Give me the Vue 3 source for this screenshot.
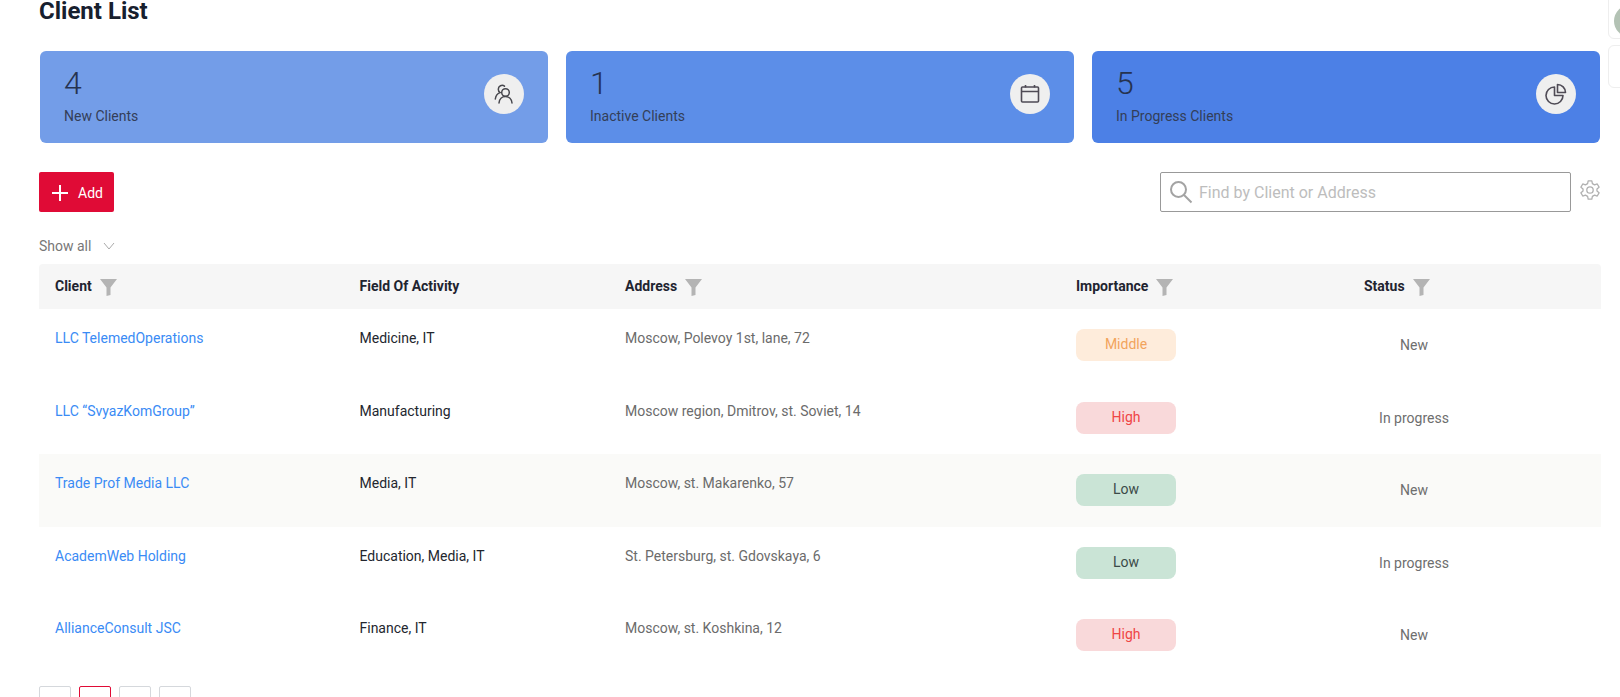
<template>
  <div class="page">
    <h1 class="title">Client List</h1>

    <div class="cards">
      <div v-for="card in cards" :key="card.label" class="card" :class="card.cls">
        <div>
          <div class="card-num">{{ card.num }}</div>
          <div class="card-label">{{ card.label }}</div>
        </div>
        <div class="card-icon">
          <svg v-if="card.icon === 'users'" width="24" height="24" viewBox="0 0 24 24" fill="none" stroke="#47474d" stroke-width="1.5" stroke-linecap="round">
            <circle cx="13.5" cy="10.5" r="3.8" />
            <path d="M7 21c.3-3.900 3-6.400 6.500-6.400s6.200 2.500 6.500 6.400" />
            <path d="M12.500 4.200A3.800 3.800 0 0 0 6.300 7.200c0 1.500.7 2.700 1.800 3.400C5.500 11.500 3.700 14 3.300 17" />
          </svg>
          <svg v-else-if="card.icon === 'calendar'" width="24" height="24" viewBox="0 0 24 24" fill="none" stroke="#4f4b55" stroke-width="1.6">
            <rect x="3.500" y="5" width="17" height="15" rx="1" />
            <path d="M3.500 9.500h17M7.500 3v2.500M16.500 3v2.500" />
          </svg>
          <svg v-else width="24" height="24" viewBox="0 0 24 24" fill="none" stroke="#4f4b55" stroke-width="1.6" stroke-linejoin="round">
            <path d="M10.500 5a8.500 8.500 0 1 0 8.500 8.500h-8.500z" />
            <path d="M13.500 2.500a8 8 0 0 1 8 8h-8z" />
          </svg>
        </div>
      </div>
    </div>

    <div class="toolbar">
      <button class="add-btn">
        <svg width="16" height="16" viewBox="0 0 16 16" stroke="#fff" stroke-width="2">
          <path d="M8 0v16M0 8h16" />
        </svg>
        Add
      </button>
      <div class="search-wrap">
        <div class="search">
          <svg width="24" height="24" viewBox="0 0 24 24" fill="none" stroke="#a3a3a3" stroke-width="2">
            <circle cx="9.500" cy="9.500" r="7.500" />
            <path d="M15 15l7.500 7.500" />
          </svg>
          <span class="placeholder">Find by Client or Address</span>
        </div>
        <svg class="gear" width="22" height="22" viewBox="0 0 24 24" fill="none" stroke="#b0b0b0" stroke-width="1.400" stroke-linejoin="round">
          <circle cx="12" cy="12" r="3.500" />
          <path d="M10 2h4l.6 3 2.400 1.400 2.900-1 2 3.500-2.300 2v2.200l2.300 2-2 3.500-2.900-1-2.400 1.400-.6 3h-4l-.6-3L7 17.600l-2.900 1-2-3.500 2.300-2v-2.200l-2.300-2 2-3.500 2.900 1L9.400 5z" />
        </svg>
      </div>
    </div>

    <div class="show-all">
      Show all
      <svg width="12" height="8" viewBox="0 0 12 8" fill="none" stroke="#aaa" stroke-width="1">
        <path d="M1 1l5 6 5-6" />
      </svg>
    </div>

    <div class="table">
      <div class="row head">
        <div v-for="col in columns" :key="col.name" class="head-cell">
          {{ col.name }}
          <svg v-if="col.filter" width="17" height="17" viewBox="0 0 17 17" fill="#b4b4b4">
            <path d="M0 0h17l-6.500 8.500V16l-4 1V8.500z" />
          </svg>
        </div>
      </div>
      <div v-for="(client, i) in clients" :key="client.name" class="row body" :class="{ striped: i === 2 }">
        <div class="cell link">{{ client.name }}</div>
        <div class="cell field">{{ client.field }}</div>
        <div class="cell address">{{ client.address }}</div>
        <div class="cell"><span class="pill" :class="client.level.toLowerCase()">{{ client.level }}</span></div>
        <div class="cell"><span class="status">{{ client.status }}</span></div>
      </div>
    </div>

    <div class="pager">
      <span class="page-box"></span>
      <span class="page-box active"></span>
      <span class="page-box"></span>
      <span class="page-box"></span>
    </div>

    <div class="side-box avatar-box"><span class="avatar"></span></div>
    <div class="side-box second-box"></div>
  </div>
</template>

<script setup>
const cards = [
  { num: 4, label: 'New Clients', cls: 'c1', icon: 'users' },
  { num: 1, label: 'Inactive Clients', cls: 'c2', icon: 'calendar' },
  { num: 5, label: 'In Progress Clients', cls: 'c3', icon: 'pie' },
]

const columns = [
  { name: 'Client', filter: true },
  { name: 'Field Of Activity', filter: false },
  { name: 'Address', filter: true },
  { name: 'Importance', filter: true },
  { name: 'Status', filter: true },
]

const clients = [
  { name: 'LLC TelemedOperations', field: 'Medicine, IT', address: 'Moscow, Polevoy 1st, lane, 72', level: 'Middle', status: 'New' },
  { name: 'LLC “SvyazKomGroup”', field: 'Manufacturing', address: 'Moscow region, Dmitrov, st. Soviet, 14', level: 'High', status: 'In progress' },
  { name: 'Trade Prof Media LLC', field: 'Media, IT', address: 'Moscow, st. Makarenko, 57', level: 'Low', status: 'New' },
  { name: 'AcademWeb Holding', field: 'Education, Media, IT', address: 'St. Petersburg, st. Gdovskaya, 6', level: 'Low', status: 'In progress' },
  { name: 'AllianceConsult JSC', field: 'Finance, IT', address: 'Moscow, st. Koshkina, 12', level: 'High', status: 'New' },
]
</script>

<style>
html, body {
  margin: 0;
  background: #fff;
  overflow: hidden;
}
</style>

<style scoped>
.page {
  position: relative;
  height: 697px;
  overflow: hidden;
  padding: 0 19px 0 39px;
  box-sizing: border-box;
  font-family: Roboto, "Liberation Sans", sans-serif;
  font-size: 14px;
  color: #1f2430;
}

.title {
  margin: 0;
  font-size: 24px;
  line-height: 23px;
  font-weight: 700;
  color: #17202e;
}

.cards {
  display: grid;
  grid-template-columns: repeat(3, 1fr);
  gap: 18px;
  margin: 28px 1px 0;
}

.card {
  height: 92px;
  box-sizing: border-box;
  padding: 15px 24px;
  border-radius: 6px;
  display: flex;
  justify-content: space-between;
  align-items: flex-start;
}

.c1 { background: #739de8; }
.c2 { background: #5c8ee8; }
.c3 { background: #4c80e6; }

.card-num {
  font-size: 32px;
  line-height: 34px;
  font-weight: 300;
  color: #263350;
}

.card-label {
  margin-top: 7px;
  font-size: 14px;
  line-height: 18px;
  color: #333e58;
}

.card-icon {
  width: 40px;
  height: 40px;
  margin-top: 8px;
  border-radius: 50%;
  background: #efefef;
  display: flex;
  align-items: center;
  justify-content: center;
}

.toolbar {
  display: flex;
  justify-content: space-between;
  margin-top: 29px;
}

.add-btn {
  width: 75px;
  height: 40px;
  display: flex;
  align-items: center;
  gap: 10px;
  padding: 2px 0 0 13px;
  border: 0;
  border-radius: 2px;
  background: #e00b36;
  color: #fff;
  font-family: inherit;
  font-size: 14px;
  font-weight: 400;
}

.search-wrap {
  display: flex;
  align-items: center;
  gap: 8px;
}

.search {
  width: 411px;
  height: 40px;
  box-sizing: border-box;
  border: 1px solid #999;
  border-radius: 2px;
  display: flex;
  align-items: center;
  gap: 6px;
  padding: 0 8px;
}

.placeholder {
  font-size: 16px;
  color: #bdbdbd;
}

.gear {
  margin-top: -4px;
}

.show-all {
  display: flex;
  align-items: center;
  gap: 12px;
  margin-top: 26px;
  height: 16px;
  color: #777;
}

.table {
  margin-top: 10px;
}

.row {
  display: grid;
  grid-template-columns: 304.5px 265.5px 451px 288px 1fr;
  padding-left: 16px;
}

.head {
  height: 45px;
  box-sizing: border-box;
  padding-bottom: 1px;
  align-items: center;
  background: #f6f6f6;
  border-radius: 4px 4px 0 0;
  font-weight: 700;
  font-size: 14px;
}

.head-cell {
  display: flex;
  align-items: center;
  gap: 8px;
}

.head-cell svg {
  margin-top: 3px;
}

.body {
  height: 72.5px;
  box-sizing: border-box;
  padding-top: 20px;
}

.striped {
  background: #fafaf8;
}

.cell {
  line-height: 18px;
}

.link { color: #3a8bf5; }
.field { color: #23262e; }
.address { color: #6b6b6b; }

.pill {
  display: block;
  width: 100px;
  height: 32px;
  line-height: 31px;
  text-align: center;
  border-radius: 8px;
}

.middle { background: #feecdb; color: #f2a45c; }
.high { background: #f9d9da; color: #ef4545; }
.low { background: #cae4d6; color: #3b4a48; }

.status {
  display: block;
  width: 100px;
  margin-top: 7px;
  text-align: center;
  color: #6e6e6e;
}

.pager {
  display: flex;
  gap: 8px;
  margin-top: 14.5px;
}

.page-box {
  width: 32px;
  height: 32px;
  box-sizing: border-box;
  border: 1px solid #d5d8dc;
  border-radius: 2px;
}

.page-box.active {
  border-color: #e00b36;
}

.side-box {
  position: absolute;
  left: 1608px;
  width: 40px;
  background: #fff;
  border: 1px solid #eee;
  border-radius: 6px;
  box-sizing: border-box;
}

.avatar-box {
  top: -6px;
  height: 45px;
}

.second-box {
  top: 45px;
  height: 43px;
}

.avatar {
  position: absolute;
  left: 5px;
  top: 10px;
  width: 32px;
  height: 32px;
  border-radius: 50%;
  background: #b3c2b4;
}
</style>
